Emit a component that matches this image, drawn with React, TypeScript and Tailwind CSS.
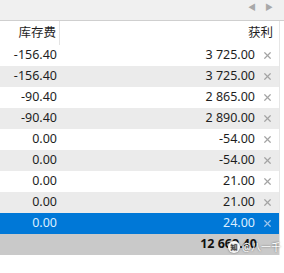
import { X } from "lucide-react";

interface Row {
  fee: string;
  profit: string;
}

const rows: Row[] = [
  { fee: "-156.40", profit: "3 725.00" },
  { fee: "-156.40", profit: "3 725.00" },
  { fee: "-90.40", profit: "2 865.00" },
  { fee: "-90.40", profit: "2 890.00" },
  { fee: "0.00", profit: "-54.00" },
  { fee: "0.00", profit: "-54.00" },
  { fee: "0.00", profit: "21.00" },
  { fee: "0.00", profit: "21.00" },
  { fee: "0.00", profit: "24.00" },
];

const SELECTED = 8;

function TableRow({ row, index }: { row: Row; index: number }) {
  const selected = index === SELECTED;
  const bg = selected ? "bg-[#0078d7]" : index % 2 === 1 ? "bg-[#ebebeb]" : "bg-white";
  const text = selected ? "text-[#dbeeff]" : "text-[#1e1e1e]";
  return (
    <div className={`flex h-[21px] items-center ${bg} ${text}`}>
      <div className="w-[57px] text-right">{row.fee}</div>
      <div className="flex-1 text-right">{row.profit}</div>
      <div className="flex w-[24px] justify-center pl-[1px]">
        <X
          size={11}
          strokeWidth={2.6}
          className={selected ? "text-[#9cc6ee]" : "text-[#a3a3a3]"}
        />
      </div>
    </div>
  );
}

export default function App() {
  return (
    <div
      className="relative h-[273px] w-[284px] overflow-hidden bg-white text-[12.5px]"
      style={{ fontFamily: '"Noto Sans", "Noto Sans CJK SC", sans-serif' }}
    >
      {/* tab strip with scroll arrows */}
      <div className="flex h-[21px] items-start justify-end gap-[9px] border-b border-[#cfcfcf] bg-[#f0f0f0] pr-[11px] pt-[1px] text-[8px] text-[#a8a8a8]">
        <span>◀</span>
        <span>▶</span>
      </div>

      <div className="flex">
        <div className="w-[279px]">
          {/* header */}
          <div className="flex h-[24px] items-center text-[#1e1e1e]">
            <div className="h-full w-[60px] border-r border-[#e3e3e3] pr-[3px] text-right leading-[24px]">
              库存费
            </div>
            <div className="flex-1 pr-[6px] text-right">获利</div>
          </div>

          {rows.map((row, i) => (
            <TableRow key={i} row={row} index={i} />
          ))}

          {/* totals */}
          <div className="flex h-[21px] items-center bg-[#c9c9c9] font-bold text-[#111]">
            <div className="w-[57px]" />
            <div className="flex-1 text-right">12 669.40</div>
            <div className="w-[22px]" />
          </div>
        </div>
        <div className="w-[1px] bg-[#e6e6e6]" />
      </div>

      {/* watermark */}
      <div className="absolute left-[228px] top-[241px] flex items-center gap-[2px] text-[10px] leading-none text-white [text-shadow:0_0_2px_rgba(0,0,0,0.6)]">
        <span className="flex h-[12px] w-[12px] items-center justify-center rounded-full bg-white text-[7px] font-bold text-[#444] shadow-[0_0_2px_rgba(0,0,0,0.5)]">
          知
        </span>
        <span>@八一千</span>
      </div>
    </div>
  );
}
